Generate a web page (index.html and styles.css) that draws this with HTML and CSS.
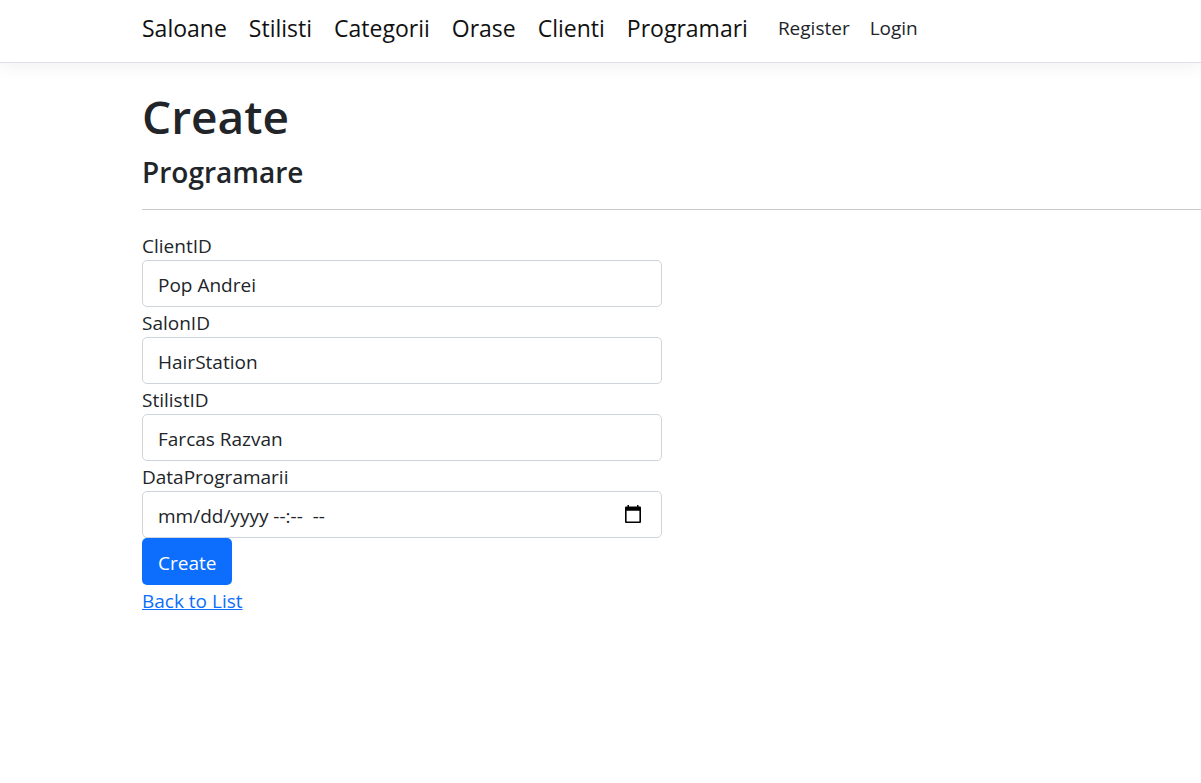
FILE: index.html
```html
<!DOCTYPE html>
<html lang="en">
<head>
<meta charset="utf-8">
<title>Create</title>
<link rel="stylesheet" href="styles.css">
</head>
<body>
<header class="navbar">
  <nav class="nav">
    <ul class="nav-main">
      <li><a href="#">Saloane</a></li>
      <li><a href="#">Stilisti</a></li>
      <li><a href="#">Categorii</a></li>
      <li><a href="#">Orase</a></li>
      <li><a href="#">Clienti</a></li>
      <li><a href="#">Programari</a></li>
    </ul>
    <ul class="nav-account">
      <li><a href="#">Register</a></li>
      <li><a href="#">Login</a></li>
    </ul>
  </nav>
</header>
<main class="content">
  <h1 class="title">Create</h1>
  <h4 class="subtitle">Programare</h4>
  <hr class="rule">
  <form class="form">
    <div class="field">
      <label for="client">ClientID</label>
      <select class="control" id="client"><option>Pop Andrei</option></select>
    </div>
    <div class="field">
      <label for="salon">SalonID</label>
      <select class="control" id="salon"><option>HairStation</option></select>
    </div>
    <div class="field">
      <label for="stylist">StilistID</label>
      <select class="control" id="stylist"><option>Farcas Razvan</option></select>
    </div>
    <div class="field">
      <label for="date">DataProgramarii</label>
      <div class="date-box">
        <input class="control" id="date" type="text" placeholder="mm/dd/yyyy --:--&nbsp; --">
        <button class="picker" type="button" aria-label="Choose date">
          <svg viewBox="0 0 16 18" width="16" height="18"><path fill="#000" fill-rule="evenodd" d="M2.500 0h1.500v1.500h8V0h1.500v1.500h1.500a1 1 0 0 1 1 1V17a1 1 0 0 1-1 1H1a1 1 0 0 1-1-1V2.500a1 1 0 0 1 1-1h1.500zM1.600 5.800v10.600h12.800V5.800z"/></svg>
        </button>
      </div>
    </div>
    <button class="submit" type="submit">Create</button>
  </form>
  <a class="back" href="#">Back to List</a>
</main>
</body>
</html>
```
FILE: styles.css
```css
* { box-sizing: border-box; }
body {
  margin: 0;
  background: #fff;
  color: #212529;
  font: 19px/30px "Open Sans", "Noto Sans", sans-serif;
}
.navbar {
  padding: 8px 0 8px 142px;
  border-bottom: 1px solid #dee2e6;
  box-shadow: 0 5px 15px rgba(0, 0, 0, 0.05);
}
.nav { display: flex; align-items: center; gap: 30px; height: 46px; padding-bottom: 6px; }
.nav ul { display: flex; margin: 0; padding: 0; list-style: none; }
.nav a { color: #212529; text-decoration: none; }
.nav .nav-main { gap: 22px; font-size: 23px; }
.nav .nav-main a { color: #111; }
.nav .nav-account { gap: 20px; }
.content { padding: 24px 0 0 142px; }
.title { margin: 0 0 10px; font-size: 46px; line-height: 58px; font-weight: 600; }
.subtitle { margin: 0 0 19px; font-size: 28px; line-height: 35px; font-weight: 600; }
.rule { margin: 0 0 20px; border: 0; border-top: 1px solid #c8c9ca; }
.form { width: 50%; max-width: 520px; }
.field label { display: block; padding-top: 2px; line-height: 28px; }
.control {
  display: block;
  width: 100%;
  height: 47px;
  padding: 2px 15px 0;
  border: 1px solid #ced4da;
  border-radius: 5px;
  background: #fff;
  color: #212529;
  font: inherit;
  appearance: none;
}
.control::placeholder { color: #212529; opacity: 1; }
.date-box { position: relative; }
.picker {
  position: absolute;
  top: 14px;
  right: 21px;
  padding: 0;
  border: 0;
  background: none;
}
.picker svg { display: block; }
.submit {
  display: block;
  height: 47px;
  padding: 2px 16px 0;
  border: 0;
  border-radius: 5px;
  background: #0d6efd;
  color: #fff;
  font: inherit;
}
.back { display: inline-block; padding-top: 2px; line-height: 28px; color: #0d6efd; }
```
